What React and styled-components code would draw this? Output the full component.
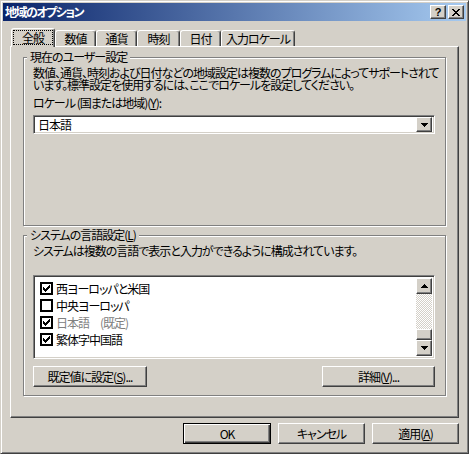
import React from 'react';
import styled, { createGlobalStyle, css } from 'styled-components';

const FACE = '#D4D0C8';
const FONT = `"Noto Sans CJK JP", "Noto Sans", sans-serif`;

const GlobalStyle = createGlobalStyle`
  html, body { margin: 0; padding: 0; background: ${FACE}; }
  body {
    font-family: ${FONT};
    font-size: 12px;
    color: #000;
    font-feature-settings: "palt";
    letter-spacing: -1px;
  }
  * { box-sizing: border-box; }
`;

const raised = css`
  border: 1px solid;
  border-color: #fff #404040 #404040 #fff;
  box-shadow: inset -1px -1px #808080, inset 1px 1px ${FACE};
  background: ${FACE};
`;

const sunken = css`
  border: 1px solid;
  border-color: #808080 #fff #fff #808080;
  box-shadow: inset 1px 1px #404040, inset -1px -1px ${FACE};
`;

const Window = styled.div`
  width: 469px;
  height: 454px;
  display: flex;
  flex-direction: column;
  border: 1px solid;
  border-color: ${FACE} #404040 #404040 ${FACE};
  box-shadow: inset 1px 1px #fff, inset -1px -1px #808080;
  padding: 2px;
  background: ${FACE};
`;

const TitleBar = styled.div`
  height: 18px;
  display: flex;
  align-items: center;
  padding: 0 2px;
  background: linear-gradient(to right, #0a246a, #a6caf0);
`;

const TitleText = styled.div`
  flex: 1;
  color: #fff;
  font-weight: bold;
  font-size: 12px;
  letter-spacing: -1.5px;
  line-height: 18px;
  white-space: nowrap;
`;

const CaptionButton = styled.div`
  ${raised};
  width: 16px;
  height: 14px;
  margin-left: ${p => p.$gap || 0}px;
  display: flex;
  align-items: center;
  justify-content: center;
  font-family: "Liberation Sans", Arial, sans-serif;
  font-weight: bold;
  font-size: 11px;
  letter-spacing: 0;
  line-height: 1;
`;

const Body = styled.div`
  flex: 1;
  display: flex;
  flex-direction: column;
  padding: 7px 7px 0 7px;
`;

const TabStrip = styled.div`
  height: 18px;
  display: flex;
  align-items: flex-end;
  padding-left: 1px;
  position: relative;
  z-index: 2;
`;

const Tab = styled.div`
  width: ${p => p.$w}px;
  height: ${p => (p.$active ? 19 : 16)}px;
  margin-bottom: ${p => (p.$active ? -1 : 0)}px;
  background: ${FACE};
  border: 1px solid;
  border-bottom: none;
  border-color: #fff #404040 transparent #fff;
  border-radius: 3px 3px 0 0;
  box-shadow: inset -1px 0 #808080;
  display: flex;
  align-items: center;
  justify-content: center;
  padding: ${p => (p.$active ? '1px 1px 2px 1px' : '0')};
  white-space: nowrap;
  line-height: 13px;
`;

const FocusRect = styled.span`
  flex: 1;
  align-self: stretch;
  display: flex;
  align-items: center;
  justify-content: center;
  border: 1px dotted #000;
`;

const Panel = styled.div`
  height: 372px;
  border: 1px solid;
  border-color: #fff #404040 #404040 #fff;
  box-shadow: inset -1px -1px #808080;
  padding: 4px 12px 0 12px;
  display: flex;
  flex-direction: column;
  position: relative;
  z-index: 1;
`;

const Group = styled.fieldset`
  margin: ${p => p.$mt || 0}px 0 0 0;
  height: ${p => p.$h}px;
  min-width: 0;
  border: 1px solid #808080;
  box-shadow: inset 1px 1px #fff, 1px 1px #fff;
  padding: 4px 10px 0 9px;
  display: flex;
  flex-direction: column;
`;

const Legend = styled.legend`
  padding: 0 3px;
  margin-left: -6px;
  line-height: 12px;
  background: ${FACE};
  white-space: nowrap;
`;

const Desc = styled.p`
  margin: 0;
  line-height: 12px;
  white-space: nowrap;
`;

const FieldLabel = styled.div`
  margin-top: 6px;
  line-height: 12px;
`;

const Combo = styled.div`
  ${sunken};
  margin-top: 6px;
  height: 19px;
  background: #fff;
  display: flex;
  align-items: center;
  padding: 2px;
`;

const ComboText = styled.div`
  flex: 1;
  padding-left: 2px;
  line-height: 15px;
`;

const ArrowButton = styled.div`
  ${raised};
  width: 16px;
  height: ${p => p.$h || 16}px;
  display: flex;
  align-items: center;
  justify-content: center;
  flex: none;
`;

const ListBox = styled.div`
  ${sunken};
  margin-top: 18px;
  height: 84px;
  background: #fff;
  display: flex;
  padding: 2px;
`;

const Items = styled.div`
  flex: 1;
  padding-top: 2px;
`;

const Row = styled.div`
  height: 17px;
  display: flex;
  align-items: center;
  padding-left: 4px;
`;

const CheckBox = styled.div`
  width: 13px;
  height: 13px;
  border: 1px solid #000;
  box-shadow: inset 1px 1px #000, inset -1px -1px #000;
  background: #fff;
  display: flex;
  align-items: center;
  justify-content: center;
  flex: none;
`;

const RowText = styled.span`
  margin-left: 3px;
  color: ${p => (p.$disabled ? '#808080' : '#000')};
  line-height: 13px;
  white-space: pre;
`;

const ScrollBar = styled.div`
  width: 16px;
  display: flex;
  flex-direction: column;
`;

const Track = styled.div`
  flex: 1;
  background-color: #fff;
  background-image: conic-gradient(${FACE} 25%, #fff 0 50%, ${FACE} 0 75%, #fff 0);
  background-size: 2px 2px;
`;

const Thumb = styled.div`
  ${raised};
  height: 11px;
`;

const ButtonRow = styled.div`
  margin-top: 7px;
  display: flex;
  justify-content: space-between;
`;

const Button = styled.div`
  ${raised};
  width: ${p => p.$w}px;
  height: 21px;
  display: flex;
  align-items: center;
  justify-content: center;
  line-height: 13px;
  white-space: nowrap;
  ${p =>
    p.$default &&
    css`
      border-color: #000;
      box-shadow: inset 1px 1px #fff, inset -1px -1px #404040, inset -2px -2px #808080;
    `}
`;

const DialogButtons = styled.div`
  margin-top: 5px;
  display: flex;
  justify-content: flex-end;
  gap: 7px;
`;

const Tri = ({ up }) => (
  <svg width="7" height="4" viewBox="0 0 7 4" shapeRendering="crispEdges">
    {up ? (
      <path d="M3 0h1v1h1v1h1v1h1v1H0V3h1V2h1V1h1z" fill="#000" />
    ) : (
      <path d="M0 0h7v1H6v1H5v1H4v1H3V3H2V2H1V1H0z" fill="#000" />
    )}
  </svg>
);

const CloseGlyph = () => (
  <svg width="8" height="7" viewBox="0 0 8 7" shapeRendering="crispEdges">
    <path
      d="M0 0h2v1h1v1h2V1h1V0h2v1H7v1H6v1H5v1h1v1h1v1h1v1H6V6H5V5H3v1H2v1H0V6h1V5h1V4h1V3H2V2H1V1H0z"
      fill="#000"
    />
  </svg>
);

const Check = () => (
  <svg width="7" height="7" viewBox="0 0 7 7" shapeRendering="crispEdges">
    <path d="M6 0h1v3H6v1H5v1H4v1H3v1H2V6H1V5H0V2h1v1h1v1h1V3h1V2h1V1h1z" fill="#000" />
  </svg>
);

const tabs = [
  { label: '全般', w: 44, active: true },
  { label: '数値', w: 41 },
  { label: '通貨', w: 41 },
  { label: '時刻', w: 43 },
  { label: '日付', w: 41 },
  { label: '入力ロケール', w: 74 },
];

const langs = [
  { label: '西ヨーロッパと米国', checked: true },
  { label: '中央ヨーロッパ', checked: false },
  { label: '日本語　(既定)', checked: true, disabled: true },
  { label: '繁体字中国語', checked: true },
];

export default function App() {
  return (
    <>
      <GlobalStyle />
      <Window>
        <TitleBar>
          <TitleText>地域のオプション</TitleText>
          <CaptionButton>?</CaptionButton>
          <CaptionButton $gap={2}>
            <CloseGlyph />
          </CaptionButton>
        </TitleBar>
        <Body>
          <TabStrip>
            {tabs.map(t => (
              <Tab key={t.label} $w={t.w} $active={t.active}>
                {t.active ? <FocusRect>{t.label}</FocusRect> : t.label}
              </Tab>
            ))}
          </TabStrip>
          <Panel>
            <Group $h={175}>
              <Legend>現在のユーザー設定</Legend>
              <Desc>
                数値、通貨、時刻および日付などの地域設定は複数のプログラムによってサポートされて
                <br />
                います。標準設定を使用するには、ここでロケールを設定してください。
              </Desc>
              <FieldLabel>
                ロケール (国または地域)(<u>Y</u>):
              </FieldLabel>
              <Combo>
                <ComboText>日本語</ComboText>
                <ArrowButton $h={15}>
                  <Tri />
                </ArrowButton>
              </Combo>
            </Group>
            <Group $h={167} $mt={3}>
              <Legend>
                システムの言語設定(<u>L</u>)
              </Legend>
              <Desc>システムは複数の言語で表示と入力ができるように構成されています。</Desc>
              <ListBox>
                <Items>
                  {langs.map(l => (
                    <Row key={l.label}>
                      <CheckBox>{l.checked && <Check />}</CheckBox>
                      <RowText $disabled={l.disabled}>{l.label}</RowText>
                    </Row>
                  ))}
                </Items>
                <ScrollBar>
                  <ArrowButton>
                    <Tri up />
                  </ArrowButton>
                  <Track />
                  <Thumb />
                  <ArrowButton>
                    <Tri />
                  </ArrowButton>
                </ScrollBar>
              </ListBox>
              <ButtonRow>
                <Button $w={114}>
                  既定値に設定(<u>S</u>)...
                </Button>
                <Button $w={113}>
                  詳細(<u>V</u>)...
                </Button>
              </ButtonRow>
            </Group>
          </Panel>
          <DialogButtons>
            <Button $w={88} $default>
              OK
            </Button>
            <Button $w={87}>キャンセル</Button>
            <Button $w={87}>
              適用(<u>A</u>)
            </Button>
          </DialogButtons>
        </Body>
      </Window>
    </>
  );
}
